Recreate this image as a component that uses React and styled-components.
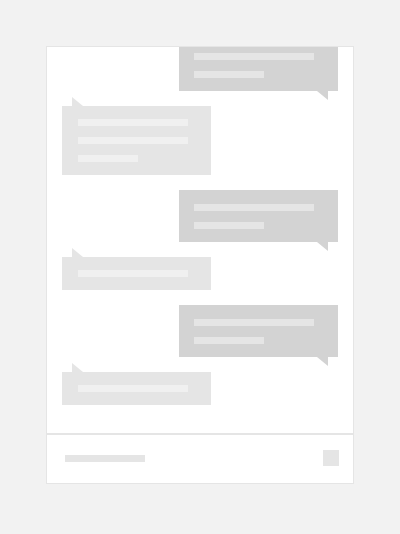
import React from "react";
import styled, { createGlobalStyle } from "styled-components";

const messages = [
  { side: "right", lines: [120, 70] },
  { side: "left", lines: [110, 110, 60] },
  { side: "right", lines: [120, 70] },
  { side: "left", lines: [110] },
  { side: "right", lines: [120, 70] },
  { side: "left", lines: [110] },
];

export default function App() {
  return (
    <Page>
      <GlobalStyle />
      <Card>
        <MessageList>
          {messages.map((msg, i) => (
            <Bubble key={i} side={msg.side}>
              {msg.lines.map((w, j) => (
                <Line key={j} side={msg.side} style={{ width: w }} />
              ))}
            </Bubble>
          ))}
        </MessageList>
        <Footer>
          <InputStub />
          <SendButton />
        </Footer>
      </Card>
    </Page>
  );
}

const GlobalStyle = createGlobalStyle`
  html, body {
    margin: 0;
    padding: 0;
    background: #f2f2f2;
    font-family: "Liberation Sans", Arial, sans-serif;
  }
`;

const Page = styled.div`
  box-sizing: border-box;
  width: 400px;
  height: 534px;
  padding: 46px 46px 50px;
`;

const Card = styled.div`
  box-sizing: border-box;
  width: 308px;
  height: 438px;
  background: #ffffff;
  border: 1px solid #e5e5e5;
  display: flex;
  flex-direction: column;
`;

const MessageList = styled.div`
  flex: 1;
  min-height: 0;
  overflow: hidden;
  display: flex;
  flex-direction: column;
  justify-content: flex-end;
  gap: 15px;
  padding: 0 15px 28px;
`;

const Bubble = styled.div`
  position: relative;
  flex-shrink: 0;
  box-sizing: border-box;
  display: flex;
  flex-direction: column;
  gap: 11px;
  align-self: ${(p) => (p.side === "right" ? "flex-end" : "flex-start")};
  width: ${(p) => (p.side === "right" ? "159px" : "149px")};
  padding: ${(p) => (p.side === "right" ? "14px 0 13px 15px" : "13px 0 13px 16px")};
  background: ${(p) => (p.side === "right" ? "#d3d3d3" : "#e5e5e5")};

  &::after {
    content: "";
    position: absolute;
    width: 11px;
    height: 9px;
    background: inherit;
    ${(p) =>
      p.side === "right"
        ? `top: 100%; right: 10px; clip-path: polygon(0 0, 100% 0, 100% 100%);`
        : `bottom: 100%; left: 10px; clip-path: polygon(0 0, 0 100%, 100% 100%);`}
  }
`;

const Line = styled.div`
  height: 7px;
  background: ${(p) => (p.side === "right" ? "#e5e5e5" : "#f0f0f0")};
`;

const Footer = styled.div`
  box-sizing: border-box;
  height: 50px;
  border-top: 2px solid #e5e5e5;
  display: flex;
  align-items: center;
  justify-content: space-between;
  padding: 0 14px 2px 18px;
`;

const InputStub = styled.div`
  width: 80px;
  height: 7px;
  background: #e5e5e5;
`;

const SendButton = styled.div`
  width: 16px;
  height: 16px;
  background: #e5e5e5;
`;
